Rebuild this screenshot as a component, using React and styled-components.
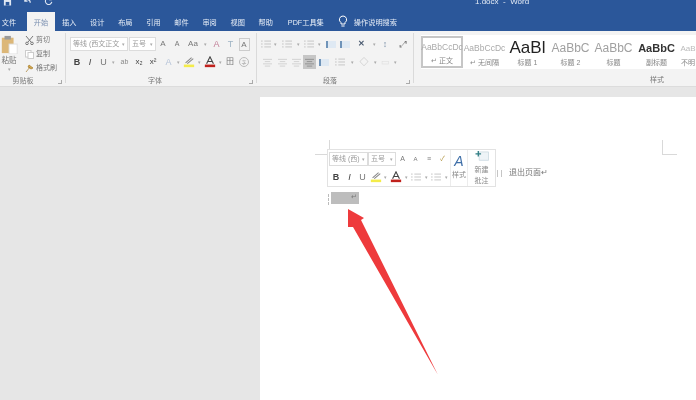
import React from "react";
import styled, { createGlobalStyle } from "styled-components";

const GlobalStyle = createGlobalStyle`
  html, body {
    margin: 0;
    padding: 0;
    background: #e6e6e6;
    font-family: "Liberation Sans", "Noto Sans CJK SC", sans-serif;
  }
  #root { width: 696px; height: 400px; overflow: hidden; }
`;

const tabs = [
  ["文件", 0],
  ["开始", 1],
  ["插入", 0],
  ["设计", 0],
  ["布局", 0],
  ["引用", 0],
  ["邮件", 0],
  ["审阅", 0],
  ["视图", 0],
  ["帮助", 0],
];

const styles = [
  { sample: "AaBbCcDc", name: "正文", size: 8.5, color: "#aaa", width: 42, mark: true, active: true },
  { sample: "AaBbCcDc", name: "无间隔", size: 8.5, color: "#aaa", width: 43, mark: true },
  { sample: "AaBl", name: "标题 1", size: 17, color: "#222", width: 43 },
  { sample: "AaBbC", name: "标题 2", size: 12, color: "#a0a0a0", width: 43 },
  { sample: "AaBbC", name: "标题", size: 12, color: "#a0a0a0", width: 43 },
  { sample: "AaBbC", name: "副标题", size: 11, color: "#333", width: 43, bold: true },
  { sample: "AaB", name: "不明", size: 8, color: "#bbb", width: 20 },
];

const Lines = ({ w = 10 }) => (
  <svg width={w} height="10" viewBox="0 0 12 10">
    <path d="M0 1.5h2M4 1.5h8M0 5h2M4 5h8M0 8.5h2M4 8.5h8" stroke="#bdbdbd" />
  </svg>
);

const Align = ({ dark }) => (
  <svg width="9" height="9" viewBox="0 0 10 9">
    <path d="M0 1h10M2 3.5h6M0 6h10M2 8.5h6" stroke={dark ? "#8f8f8f" : "#cfcfcf"} />
  </svg>
);

const Caret = () => (
  <Slot $w={6}>
    <CaretMark>▾</CaretMark>
  </Slot>
);

const FontColor = () => (
  <svg width="12" height="12" viewBox="0 0 14 14">
    <path d="M3 9 7 1l4 8M4.6 6.4h4.8" fill="none" stroke="#444" strokeWidth="1.3" />
    <rect x="1" y="10" width="12" height="3" fill="#c0211c" />
  </svg>
);

const Highlight = () => (
  <svg width="12" height="12" viewBox="0 0 14 14">
    <path d="M3 8 10 2M5 9l7-6" stroke="#888" strokeWidth="1.2" />
    <rect x="1" y="10" width="12" height="3" fill="#f4ec4a" />
  </svg>
);

const App = () => (
  <Window>
    <GlobalStyle />
    <TitleBar>
      <QuickIcons>
        <svg width="9" height="9" viewBox="0 0 10 9">
          <path d="M1 0h7l1 1v8H1z" fill="#dfe7f3" />
          <rect x="3" y="5" width="4" height="4" fill="#2b579a" />
        </svg>
        <svg width="10" height="9" viewBox="0 0 11 9">
          <path d="M2 1v3h3M2 4c2-3 6-2 6 2" fill="none" stroke="#dfe7f3" strokeWidth="1.3" />
        </svg>
        <svg width="9" height="9" viewBox="0 0 10 9">
          <path d="M8 2a3.6 3.6 0 1 0 .7 3M8 0v2.6H5.5" fill="none" stroke="#dfe7f3" strokeWidth="1.2" />
        </svg>
        <TinyDot />
      </QuickIcons>
      <DocTitle>1.docx  -  Word</DocTitle>
    </TitleBar>
    <TabBar>
      {tabs.map(([label, active]) => (
        <Tab key={label} $active={active}>
          {label}
        </Tab>
      ))}
      <PdfTab>PDF工具集</PdfTab>
      <SearchTab>
        <svg width="10" height="13" viewBox="0 0 10 13">
          <path d="M5 1a3.6 3.6 0 0 0-2 6.6V9h4V7.6A3.6 3.6 0 0 0 5 1zM3.4 11h3.2" fill="none" stroke="#fff" />
        </svg>
        操作说明搜索
      </SearchTab>
    </TabBar>

    <Ribbon>
      <Group $width={66}>
        <GroupBody>
          <PasteColumn>
            <svg width="17" height="19" viewBox="0 0 17 21">
              <rect x="0" y="3" width="13" height="17" fill="#dcb778" />
              <rect x="3" y="1" width="7" height="4" fill="#9a9a9a" />
              <rect x="8" y="10" width="9" height="11" fill="#fff" stroke="#ddd" />
            </svg>
            <PasteLabel>粘贴</PasteLabel>
            <CaretMark>▾</CaretMark>
          </PasteColumn>
          <ClipColumn>
            <ClipRow>
              <svg width="9" height="9" viewBox="0 0 9 9">
                <path d="M1 0l5 6M8 0 3 6" stroke="#777" />
                <circle cx="2" cy="7.4" r="1.3" fill="none" stroke="#777" />
                <circle cx="7" cy="7.4" r="1.3" fill="none" stroke="#777" />
              </svg>
              剪切
            </ClipRow>
            <ClipRow>
              <svg width="9" height="9" viewBox="0 0 9 9">
                <rect x="0.5" y="0.5" width="5.5" height="6.5" fill="#fff" stroke="#ccc" />
                <rect x="3" y="2.5" width="5.5" height="6" fill="#fff" stroke="#ccc" />
              </svg>
              复制
            </ClipRow>
            <ClipRow>
              <svg width="9" height="9" viewBox="0 0 9 9">
                <path d="M1 8 5 3M4 1l4 3-2 1-3-2z" fill="#d5a94e" stroke="#a67c2d" strokeWidth="0.7" />
              </svg>
              格式刷
            </ClipRow>
          </ClipColumn>
        </GroupBody>
        <GroupLabel $shift={23}>
          剪贴板<Launcher />
        </GroupLabel>
      </Group>

      <Group $width={191}>
        <GroupBody>
          <ControlStack>
            <ToolRow>
              <FontSelect $width={58}>
                等线 (西文正文<CaretMark>▾</CaretMark>
              </FontSelect>
              <FontSelect $width={27} $gap>
                五号<CaretMark>▾</CaretMark>
              </FontSelect>
              <Slot $w={14} $size={8}>A</Slot>
              <Slot $w={14} $size={7}>A</Slot>
              <Slot $w={18} $size={8}>Aa</Slot>
              <Caret />
              <Slot $w={17} $size={9} $color="#c27f97">A</Slot>
              <Slot $w={11} $size={9} $color="#9fb4c4">T</Slot>
              <Slot $w={16}>
                <BoxGlyph>A</BoxGlyph>
              </Slot>
            </ToolRow>
            <ToolRow>
              <Slot $w={14} $size={9} $bold $color="#444">B</Slot>
              <Slot $w={12} $size={9} $italic $color="#444">I</Slot>
              <Slot $w={15} $size={9}>U</Slot>
              <Slot $w={5}>
                <CaretMark>▾</CaretMark>
              </Slot>
              <Slot $w={17} $size={7} $color="#888">ab</Slot>
              <Slot $w={12} $size={8} $color="#444">x₂</Slot>
              <Slot $w={16} $size={8} $color="#444">x²</Slot>
              <Slot $w={15} $size={9} $color="#b5c3d8">A</Slot>
              <Slot $w={5}>
                <CaretMark>▾</CaretMark>
              </Slot>
              <Slot $w={15}>
                <Highlight />
              </Slot>
              <Caret />
              <Slot $w={15}>
                <FontColor />
              </Slot>
              <Caret />
              <Slot $w={14} $size={8}>田</Slot>
              <Slot $w={14}>
                <CircleGlyph>字</CircleGlyph>
              </Slot>
            </ToolRow>
          </ControlStack>
        </GroupBody>
        <GroupLabel $shift={16}>
          字体<Launcher />
        </GroupLabel>
      </Group>

      <Group $width={157} $pad={3}>
        <GroupBody>
          <ControlStack>
            <ToolRow>
              <Slot $w={12}><Lines /></Slot>
              <Slot $w={7}><CaretMark>▾</CaretMark></Slot>
              <Slot $w={16}><Lines /></Slot>
              <Slot $w={7}><CaretMark>▾</CaretMark></Slot>
              <Slot $w={14}><Lines /></Slot>
              <Slot $w={7}><CaretMark>▾</CaretMark></Slot>
              <Slot $w={15}><IndentBox /></Slot>
              <Slot $w={14}><IndentBox /></Slot>
              <Slot $w={19} $size={8} $bold $color="#4a5a70">✕</Slot>
              <Caret />
              <Slot $w={16} $size={9} $color="#7f93aa">↕</Slot>
              <Slot $w={20} $size={9} $color="#777">⤢</Slot>
            </ToolRow>
            <ToolRow>
              <Slot $w={15}><Align /></Slot>
              <Slot $w={14}><Align /></Slot>
              <Slot $w={14}><Align /></Slot>
              <ActiveAlign>
                <Align dark />
              </ActiveAlign>
              <Slot $w={15}><IndentBox /></Slot>
              <Slot $w={18}><Lines /></Slot>
              <Slot $w={7}><CaretMark>▾</CaretMark></Slot>
              <Slot $w={16} $size={9} $color="#bbb">◇</Slot>
              <Caret />
              <Slot $w={14} $size={9} $color="#ddd">▭</Slot>
              <Caret />
            </ToolRow>
          </ControlStack>
        </GroupBody>
        <GroupLabel $shift={13}>
          段落<Launcher />
        </GroupLabel>
      </Group>

      <StylesGroup>
        <Gallery>
          {styles.map((s) => (
            <StyleCard key={s.name} $width={s.width} $active={s.active}>
              <StyleSample $size={s.size} $color={s.color} $bold={s.bold}>
                {s.sample}
              </StyleSample>
              <StyleName>
                {s.mark && "↵ "}
                {s.name}
              </StyleName>
            </StyleCard>
          ))}
        </Gallery>
        <StylesLabel>样式</StylesLabel>
      </StylesGroup>
    </Ribbon>
    <RibbonGap />

    <Workspace>
      <Page>
        <CropTopLeft />
        <CropTopRight />
        <ExitLine>
          <ExitMark />
          退出页面↵
        </ExitLine>
        <MiniToolbar>
          <MiniControls>
            <ToolRow>
              <FontSelect $width={39}>
                等线 (西)<CaretMark>▾</CaretMark>
              </FontSelect>
              <FontSelect $width={28}>
                五号<CaretMark>▾</CaretMark>
              </FontSelect>
              <Slot $w={13} $size={7}>A</Slot>
              <Slot $w={13} $size={6}>A</Slot>
              <Slot $w={14} $size={7}>≡</Slot>
              <Slot $w={13} $size={7} $color="#b59a4a">✓</Slot>
            </ToolRow>
            <ToolRow>
              <Slot $w={14} $size={9} $bold $color="#444">B</Slot>
              <Slot $w={13} $size={9} $italic $color="#444">I</Slot>
              <Slot $w={13} $size={9}>U</Slot>
              <Slot $w={13}><Highlight /></Slot>
              <Slot $w={7}><CaretMark>▾</CaretMark></Slot>
              <Slot $w={14}><FontColor /></Slot>
              <Caret />
              <Slot $w={14}><Lines /></Slot>
              <Caret />
              <Slot $w={14}><Lines /></Slot>
              <Slot $w={7}><CaretMark>▾</CaretMark></Slot>
            </ToolRow>
          </MiniControls>
          <StylesAction>
            <StylesGlyph>A</StylesGlyph>
            <span>样式</span>
          </StylesAction>
          <CommentAction>
            <svg width="16" height="14" viewBox="0 0 16 14">
              <path d="M5 1h10v9H5z" fill="#eef4f7" stroke="#cfdee4" />
              <path d="M4 0v6M1 3h6" stroke="#2f7d84" strokeWidth="1.4" />
            </svg>
            <span>新建</span>
            <span>批注</span>
          </CommentAction>
        </MiniToolbar>
        <SelectedBlock>↵</SelectedBlock>
        <ArrowSvg width="110" height="180" viewBox="0 0 110 180">
          <path d="M10 8 26 17 23 19 100 174 15 26 10 26z" fill="#ee3a3c" />
        </ArrowSvg>
      </Page>
    </Workspace>
  </Window>
);

const Window = styled.div`
  width: 696px;
  height: 400px;
  display: flex;
  flex-direction: column;
  background: #e6e6e6;
  overflow: hidden;
  filter: blur(0.5px);
`;

const TitleBar = styled.div`
  height: 12px;
  background: #2b579a;
  display: flex;
  position: relative;
`;

const QuickIcons = styled.div`
  display: flex;
  align-items: center;
  gap: 11px;
  padding-left: 3px;
  height: 6px;
  overflow: hidden;
  svg { flex: none; margin-top: -3px; }
`;

const TinyDot = styled.i`
  width: 2px;
  height: 2px;
`;

const DocTitle = styled.div`
  position: absolute;
  left: 475px;
  top: -3px;
  font-size: 8px;
  line-height: 10px;
  color: #e4ebf5;
  white-space: pre;
`;

const TabBar = styled.div`
  height: 19px;
  background: #2b579a;
  display: flex;
  align-items: stretch;
  font-size: 7.2px;
  color: #e8eef7;
`;

const Tab = styled.div`
  width: 28.1px;
  display: flex;
  align-items: center;
  justify-content: center;
  background: ${(p) => (p.$active ? "#f3f3f3" : "transparent")};
  color: ${(p) => (p.$active ? "#7a8fb0" : "#e8eef7")};
  &:first-child {
    width: 27px;
    box-sizing: border-box;
    padding-right: 9px;
  }
`;

const PdfTab = styled.div`
  display: flex;
  align-items: center;
  margin-left: 8px;
  width: 50px;
`;

const SearchTab = styled.div`
  display: flex;
  align-items: center;
  gap: 6px;
`;

const Ribbon = styled.div`
  height: 56px;
  background: #f3f3f3;
  border-bottom: 1px solid #dcdcdc;
  box-sizing: border-box;
  display: flex;
`;

const RibbonGap = styled.div`
  height: 10px;
  background: #e6e6e6;
`;

const Group = styled.div`
  width: ${(p) => p.$width}px;
  flex: none;
  box-sizing: border-box;
  padding: 6px 1px 0 ${(p) => p.$pad ?? 4}px;
  display: flex;
  flex-direction: column;
  position: relative;
  &::after {
    content: "";
    position: absolute;
    right: 0;
    top: 2px;
    bottom: 3px;
    width: 1px;
    background: #dadada;
  }
`;

const GroupBody = styled.div`
  flex: 1;
  display: flex;
  min-height: 0;
`;

const GroupLabel = styled.div`
  height: 12px;
  font-size: 7px;
  line-height: 14px;
  color: #777;
  text-align: center;
  padding-right: ${(p) => p.$shift}px;
  position: relative;
`;

const Launcher = styled.i`
  position: absolute;
  right: 3px;
  top: 6px;
  width: 3px;
  height: 3px;
  border-right: 1px solid #aaa;
  border-bottom: 1px solid #aaa;
`;

const PasteColumn = styled.div`
  width: 18px;
  margin: -2px 0 0 -4px;
  display: flex;
  flex-direction: column;
  align-items: center;
  font-size: 7.5px;
  color: #777;
`;

const PasteLabel = styled.span`
  margin-top: 1px;
  line-height: 11px;
`;

const ClipColumn = styled.div`
  display: flex;
  flex-direction: column;
  gap: 4px;
  margin: -2px 0 0 7px;
`;

const ClipRow = styled.div`
  display: flex;
  align-items: center;
  gap: 2px;
  font-size: 7px;
  line-height: 10px;
  color: #777;
  white-space: nowrap;
`;

const ControlStack = styled.div`
  display: flex;
  flex-direction: column;
  gap: 4px;
`;

const ToolRow = styled.div`
  display: flex;
  align-items: center;
  height: 14px;
  svg { flex: none; }
`;

const Slot = styled.span`
  width: ${(p) => p.$w}px;
  flex: none;
  display: flex;
  align-items: center;
  justify-content: center;
  font-size: ${(p) => p.$size ?? 8}px;
  line-height: 12px;
  color: ${(p) => p.$color ?? "#777"};
  font-weight: ${(p) => (p.$bold ? 700 : 400)};
  font-style: ${(p) => (p.$italic ? "italic" : "normal")};
`;

const FontSelect = styled.div`
  width: ${(p) => p.$width}px;
  height: 14px;
  flex: none;
  box-sizing: border-box;
  border: 1px solid #dcdcdc;
  background: #fff;
  font-size: 7px;
  line-height: 12px;
  color: #999;
  padding: 0 2px;
  margin-left: ${(p) => (p.$gap ? 1 : 0)}px;
  display: flex;
  justify-content: space-between;
  white-space: nowrap;
`;

const CaretMark = styled.span`
  font-size: 5px;
  color: #aaa;
`;

const BoxGlyph = styled.span`
  width: 9px;
  height: 11px;
  border: 1px solid #ccc;
  font-size: 8px;
  line-height: 11px;
  text-align: center;
  color: #777;
`;

const CircleGlyph = styled.span`
  width: 8px;
  height: 8px;
  border: 1px solid #bbb;
  border-radius: 50%;
  font-size: 5px;
  line-height: 8px;
  text-align: center;
  color: #999;
`;

const IndentBox = styled.i`
  width: 8px;
  height: 7px;
  background: #dfe9f3;
  border-left: 2px solid #6f93b8;
`;

const ActiveAlign = styled.span`
  width: 13px;
  height: 14px;
  flex: none;
  background: #c6c6c6;
  display: flex;
  align-items: center;
  justify-content: center;
`;

const StylesGroup = styled.div`
  flex: 1;
  display: flex;
  flex-direction: column;
  padding: 4px 0 0 7px;
  min-width: 0;
`;

const Gallery = styled.div`
  height: 34px;
  flex: none;
  background: #fff;
  display: flex;
  align-items: flex-start;
  padding-top: 1px;
  box-sizing: border-box;
`;

const StyleCard = styled.div`
  width: ${(p) => p.$width}px;
  height: 32px;
  flex: none;
  box-sizing: border-box;
  border: ${(p) => (p.$active ? "2px solid #c6c6c6" : "0 solid transparent")};
  padding-top: ${(p) => (p.$active ? 0 : 2)}px;
  display: flex;
  flex-direction: column;
  align-items: center;
`;

const StyleSample = styled.div`
  height: 20px;
  display: flex;
  align-items: center;
  font-size: ${(p) => p.$size}px;
  color: ${(p) => p.$color};
  font-weight: ${(p) => (p.$bold ? 700 : 400)};
  white-space: nowrap;
`;

const StyleName = styled.div`
  font-size: 7px;
  line-height: 10px;
  color: #888;
  white-space: nowrap;
`;

const StylesLabel = styled.div`
  font-size: 7px;
  line-height: 22px;
  color: #777;
  padding-left: 229px;
`;

const Workspace = styled.div`
  flex: 1;
  padding-left: 260px;
  min-height: 0;
`;

const Page = styled.div`
  height: 100%;
  background: #fff;
  position: relative;
`;

const CropTopLeft = styled.i`
  position: absolute;
  left: 55px;
  top: 43px;
  width: 14px;
  height: 14px;
  border-right: 1px solid #d9d9d9;
  border-bottom: 1px solid #d9d9d9;
`;

const CropTopRight = styled.i`
  position: absolute;
  left: 402px;
  top: 43px;
  width: 14px;
  height: 14px;
  border-left: 1px solid #d9d9d9;
  border-bottom: 1px solid #d9d9d9;
`;

const ExitLine = styled.div`
  position: absolute;
  left: 237px;
  top: 70px;
  display: flex;
  align-items: center;
  font-size: 8px;
  line-height: 12px;
  color: #777;
`;

const ExitMark = styled.i`
  width: 3px;
  height: 7px;
  margin-right: 7px;
  border-right: 1px solid #c5c5c5;
  border-left: 1px solid #c5c5c5;
`;

const MiniToolbar = styled.div`
  position: absolute;
  left: 67px;
  top: 52px;
  width: 169px;
  height: 38px;
  box-sizing: border-box;
  border: 1px solid #e2e2e2;
  background: #fff;
  display: flex;
`;

const MiniControls = styled.div`
  width: 122px;
  flex: none;
  padding: 2px 0 0 1px;
  display: flex;
  flex-direction: column;
  gap: 4px;
  box-sizing: border-box;
`;

const StylesAction = styled.div`
  width: 16px;
  flex: none;
  border-left: 1px solid #ececec;
  display: flex;
  flex-direction: column;
  align-items: center;
  font-size: 7px;
  line-height: 10px;
  color: #888;
  padding-top: 2px;
`;

const CommentAction = styled.div`
  flex: 1;
  border-left: 1px solid #ececec;
  display: flex;
  flex-direction: column;
  align-items: center;
  font-size: 7px;
  line-height: 11px;
  color: #888;
  padding-top: 1px;
`;

const StylesGlyph = styled.span`
  font-size: 14px;
  line-height: 18px;
  color: #3f6fa8;
  font-style: italic;
`;

const SelectedBlock = styled.div`
  position: absolute;
  left: 71px;
  top: 95px;
  width: 28px;
  height: 12px;
  background: #bdbdbd;
  font-size: 7px;
  line-height: 10px;
  color: #777;
  text-align: right;
  padding-right: 2px;
  box-sizing: border-box;
  &::before {
    content: "";
    position: absolute;
    left: -3px;
    top: 2px;
    height: 11px;
    border-left: 1px dashed #bbb;
  }
`;

const ArrowSvg = styled.svg`
  position: absolute;
  left: 78px;
  top: 104px;
`;

export default App;
